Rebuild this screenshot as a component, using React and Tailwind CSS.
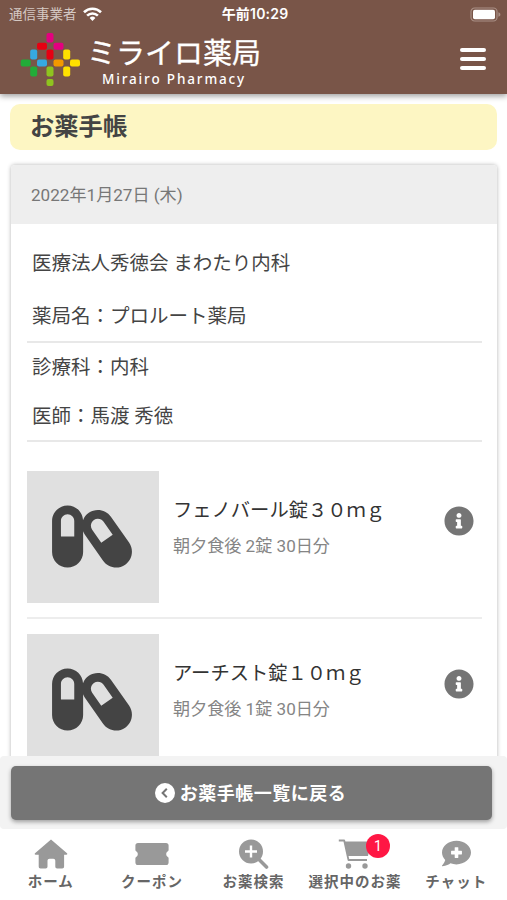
import { FaCapsules, FaCommentMedical, FaInfoCircle } from 'react-icons/fa'

const LOGO_TILES = [
  { x: 26.5, y: 0, w: 7, h: 9.5, color: '#e4007f' },
  { x: 17, y: 9.8, w: 10, h: 7, color: '#e60012' },
  { x: 33.5, y: 9.8, w: 10, h: 7, color: '#e4007f' },
  { x: 26.5, y: 16.5, w: 7, h: 10, color: '#e60012' },
  { x: 10.2, y: 16.5, w: 7, h: 10, color: '#36a9e1' },
  { x: 43.2, y: 16.5, w: 7, h: 10, color: '#ffe100' },
  { x: 0.7, y: 26.5, w: 10, h: 7, color: '#22ac38' },
  { x: 17, y: 26.5, w: 10, h: 7, color: '#36a9e1' },
  { x: 33.5, y: 26.5, w: 10, h: 7, color: '#f39800' },
  { x: 50, y: 26.5, w: 10, h: 7, color: '#ffe100' },
  { x: 10.2, y: 33.5, w: 7, h: 10, color: '#22ac38' },
  { x: 26.5, y: 33.5, w: 7, h: 10, color: '#8fc31f' },
  { x: 43.2, y: 33.5, w: 7, h: 10, color: '#ffe100' },
  { x: 26.5, y: 46, w: 7, h: 7, color: '#8fc31f' },
]

const MEDICINES = [
  { name: 'フェノバール錠３０ｍｇ', usage: '朝夕食後 2錠 30日分' },
  { name: 'アーチスト錠１０ｍｇ', usage: '朝夕食後 1錠 30日分' },
]

function WifiIcon() {
  return (
    <svg width="19" height="15" viewBox="0 0 19 15" fill="none" stroke="#fff" strokeWidth="2.6">
      <path d="M1 5.2a12.2 12.2 0 0 1 17 0" />
      <path d="M4.1 8.6a7.8 7.8 0 0 1 10.8 0" />
      <path d="M9.5 14 6.6 11a4.2 4.2 0 0 1 5.8 0z" fill="#fff" stroke="none" />
    </svg>
  )
}

function BatteryIcon() {
  return (
    <svg width="31" height="15" viewBox="0 0 31 15">
      <rect x="1" y="1" width="26" height="13" rx="3.6" fill="none" stroke="#a98f85" strokeWidth="1.2" />
      <rect x="3" y="2.8" width="22" height="9.4" rx="1.8" fill="#fff" />
      <path d="M28.4 5.2c1.6.5 2 1.4 2 2.3s-.4 1.8-2 2.3z" fill="#a98f85" />
    </svg>
  )
}

function HomeIcon() {
  return (
    <svg width="34" height="30" viewBox="0 0 34 30" fill="#999">
      <path d="M17 .4 33 14.3c.6.6.3 1.5-.6 1.5h-2.3v11.7c0 1.2-.7 1.9-1.9 1.9h-5c-1.2 0-1.9-.7-1.9-1.9v-5.7c0-1.2-.8-2-2-2h-3.800c-1.200 0-2 .8-2 2v5.700c0 1.200-.7 1.900-1.900 1.900h-5c-1.200 0-1.900-.7-1.900-1.900V15.800H1.600c-.9 0-1.200-.9-.6-1.500z" />
    </svg>
  )
}

function TicketIcon() {
  return (
    <svg width="34" height="30" viewBox="0 0 34 30" fill="#999">
      <path d="M3 4h28c1.600 0 2.600 1 2.600 2.600v4.500c0 .6-.3.9-.8 1.200a3.200 3.200 0 0 0 0 5.600c.5.3.8.6.8 1.200v4.300c0 1.600-1 2.600-2.600 2.600H3c-1.600 0-2.600-1-2.600-2.600v-4.300c0-.6.3-.9.8-1.200a3.200 3.200 0 0 0 0-5.600c-.5-.3-.8-.6-.8-1.200V6.600C.4 5 1.400 4 3 4z" />
    </svg>
  )
}

function SearchPlusIcon() {
  return (
    <svg width="32" height="30" viewBox="0 0 32 30">
      <circle cx="14" cy="12.5" r="12" fill="#999" />
      <path d="m21 19.5 8.5 8.5" stroke="#999" strokeWidth="3.6" strokeLinecap="round" />
      <path d="M8 12.5h12M14 6.5v12" stroke="#fff" strokeWidth="2.4" />
    </svg>
  )
}

function CartIcon() {
  return (
    <svg width="34" height="30" viewBox="0 0 34 30">
      <path d="M.8 1.5h5.4L10.500 21H29" fill="none" stroke="#999" strokeWidth="1.800" strokeLinejoin="round" />
      <path d="M6.500 2.600H33l-3 14.400H9.600z" fill="#999" />
      <circle cx="10.500" cy="27" r="2.700" fill="#999" />
      <circle cx="27" cy="27" r="2.700" fill="#999" />
    </svg>
  )
}

const TABS = [
  { label: 'ホーム', icon: <HomeIcon /> },
  { label: 'クーポン', icon: <TicketIcon /> },
  { label: 'お薬検索', icon: <SearchPlusIcon /> },
  { label: '選択中のお薬', icon: <CartIcon />, badge: 1 },
  { label: 'チャット', icon: <FaCommentMedical size={29} color="#999" /> },
]

function Header() {
  return (
    <header className="relative z-10 h-[94px] shrink-0 bg-[#795548] text-white shadow-[0_2px_6px_rgba(0,0,0,0.4)]">
      <div className="grid h-7 grid-cols-3 items-center pr-[6px] pl-[9px] leading-7">
        <div className="flex items-center gap-[6px] text-[13.5px] whitespace-nowrap text-[#d5c9c4]">
          通信事業者 <WifiIcon />
        </div>
        <div className="text-center font-['Inter','Noto_Sans_CJK_JP',sans-serif] text-[14px] font-semibold tracking-[0.2px]">
          午前10:29
        </div>
        <div className="flex justify-end"><BatteryIcon /></div>
      </div>
      <div className="flex items-start pt-[5px] pr-[21px] pl-5">
        <svg width="61" height="54" viewBox="0 0 61 54">
          {LOGO_TILES.map((t) => (
            <rect key={`${t.x}-${t.y}`} x={t.x} y={t.y} width={t.w} height={t.h} rx="2" fill={t.color} />
          ))}
        </svg>
        <div className="ml-[6px] whitespace-nowrap">
          <div className="pt-1 text-[29px] leading-[34px] [-webkit-text-stroke:0.3px_white]">ミライロ薬局</div>
          <div className="ml-[15px] font-['Noto_Sans',sans-serif] text-[13.5px] leading-[17px] font-medium tracking-[1.85px]">
            Mirairo Pharmacy
          </div>
        </div>
        <button type="button" className="mt-[15px] ml-auto flex flex-col gap-[5px]">
          <span className="block h-1 w-[26px] rounded-sm bg-white" />
          <span className="block h-1 w-[26px] rounded-sm bg-white" />
          <span className="block h-1 w-[26px] rounded-sm bg-white" />
        </button>
      </div>
    </header>
  )
}

function MedicineRow({ name, usage }) {
  return (
    <li className="flex h-[163px] border-b-2 border-[#ededed] pt-[15px]">
      <div className="flex size-[132px] shrink-0 items-center justify-center bg-[#e0e0e0] pr-[2px] pb-[2px]">
        <FaCapsules className="h-[71px] w-20 text-[#444]" />
      </div>
      <div className="ml-[14px] grow pt-[22px] whitespace-nowrap">
        <div className="text-[19.3px] leading-[35px] text-[#333]">{name}</div>
        <div className="text-[17.1px] leading-9 text-[#858585]">{usage}</div>
      </div>
      <FaInfoCircle size={30} className="mt-[35px] mr-2 shrink-0 text-[#757575]" />
    </li>
  )
}

function TabBar() {
  return (
    <nav className="grid h-[71px] grid-cols-5 bg-white">
      {TABS.map((tab) => (
        <a key={tab.label} className="flex flex-col items-center pt-[9px] whitespace-nowrap">
          <span className="relative flex h-[31px] items-center">
            {tab.icon}
            {tab.badge && (
              <span className="absolute -top-1 left-[28px] flex size-6 items-center justify-center rounded-full bg-[#ff1744] text-[14px] text-white">
                {tab.badge}
              </span>
            )}
          </span>
          <span className="pt-[2px] text-[14.5px] leading-6 font-bold tracking-[1px] text-[#666]">{tab.label}</span>
        </a>
      ))}
    </nav>
  )
}

export default function App() {
  return (
    <div className="flex h-[900px] w-[507px] flex-col overflow-hidden bg-white font-['Roboto','Noto_Sans_CJK_JP',sans-serif] text-[#444]">
      <Header />
      <main className="min-h-0 flex-1 overflow-hidden pt-[10px] pr-[10px] pl-[11px]">
        <h1 className="-ml-px h-[46px] rounded-[10px] bg-[#fdf6c3] pl-5 text-[24.3px] leading-[46px] font-bold text-[#444]">
          お薬手帳
        </h1>
        <section className="mt-[15px] h-[700px] rounded-t-[4px] bg-white shadow-[0_0_4px_rgba(0,0,0,0.3)]">
          <div className="h-[59px] rounded-t-[4px] bg-[#eee] pl-5 text-[17.1px] leading-[60px] text-[#777]">
            2022年1月27日 (木)
          </div>
          <div className="pr-[15px] pl-4 text-[19.5px] text-[#444]">
            <div className="h-[119px] border-b-2 border-[#e8e8e8] pt-[13px] pl-[5px]">
              <p className="h-[53px] leading-[53px]">医療法人秀徳会 まわたり内科</p>
              <p className="h-[53px] leading-[54px]">薬局名：プロルート薬局</p>
            </div>
            <div className="h-[99px] border-b-2 border-[#e8e8e8] pl-[5px]">
              <p className="h-[49px] leading-[49px]">診療科：内科</p>
              <p className="h-[49px] leading-[49px]">医師：馬渡 秀徳</p>
            </div>
            <ul className="pt-[14px]">
              {MEDICINES.map((m) => (
                <MedicineRow key={m.name} {...m} />
              ))}
            </ul>
          </div>
        </section>
      </main>
      <footer className="relative z-10 shrink-0">
        <div className="h-[73px] rounded-[4px] bg-[#f3f3f3] pt-[10px] pr-[15px] pl-[11px]">
          <button
            type="button"
            className="flex h-[54px] w-full items-center justify-center gap-[5px] rounded-[5px] bg-[#757575] pr-[2px] text-[18px] font-bold tracking-[0.5px] text-white shadow-[0_2px_4px_rgba(0,0,0,0.35)]"
          >
            <svg width="20" height="20" viewBox="0 0 20 20">
              <circle cx="10" cy="10" r="10" fill="#fff" />
              <path d="m11.8 5.8-4.2 4.2 4.2 4.2" fill="none" stroke="#757575" strokeWidth="2" />
            </svg>
            お薬手帳一覧に戻る
          </button>
        </div>
        <TabBar />
      </footer>
    </div>
  )
}
